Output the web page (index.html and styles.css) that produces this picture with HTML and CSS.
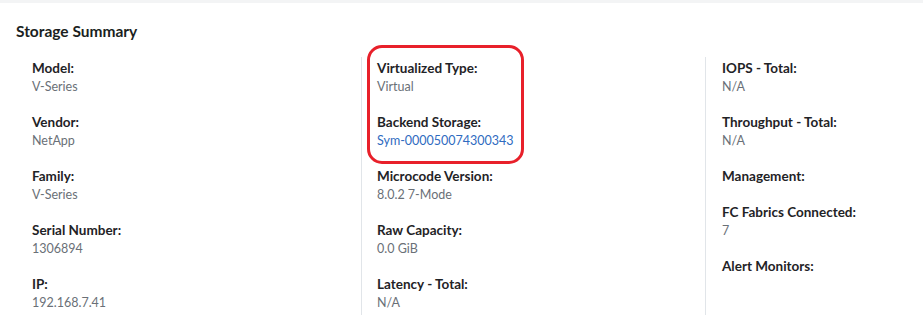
FILE: index.html
```html
<!DOCTYPE html>
<html lang="en">
<head>
<meta charset="utf-8">
<title>Storage Summary</title>
<link rel="stylesheet" href="styles.css">
</head>
<body>
<div class="topband"></div>
<section class="summary">
  <h2 class="title">Storage Summary</h2>
  <div class="grid">
    <div class="col">
      <div class="item"><div class="label">Model:</div><div class="value">V-Series</div></div>
      <div class="item"><div class="label">Vendor:</div><div class="value">NetApp</div></div>
      <div class="item"><div class="label">Family:</div><div class="value">V-Series</div></div>
      <div class="item"><div class="label">Serial Number:</div><div class="value">1306894</div></div>
      <div class="item"><div class="label">IP:</div><div class="value">192.168.7.41</div></div>
    </div>
    <div class="col divided">
      <div class="highlight"></div>
      <div class="item"><div class="label">Virtualized Type:</div><div class="value">Virtual</div></div>
      <div class="item"><div class="label">Backend Storage:</div><div class="value"><a class="link" href="#">Sym-000050074300343</a></div></div>
      <div class="item"><div class="label">Microcode Version:</div><div class="value">8.0.2 7-Mode</div></div>
      <div class="item"><div class="label">Raw Capacity:</div><div class="value">0.0 GiB</div></div>
      <div class="item"><div class="label">Latency - Total:</div><div class="value">N/A</div></div>
    </div>
    <div class="col divided third">
      <div class="item"><div class="label">IOPS - Total:</div><div class="value">N/A</div></div>
      <div class="item"><div class="label">Throughput - Total:</div><div class="value">N/A</div></div>
      <div class="item"><div class="label">Management:</div></div>
      <div class="item"><div class="label">FC Fabrics Connected:</div><div class="value">7</div></div>
      <div class="item"><div class="label">Alert Monitors:</div></div>
    </div>
  </div>
</section>
</body>
</html>
```
FILE: styles.css
```css
html, body {
  margin: 0;
  padding: 0;
  background: #ffffff;
  overflow: hidden;
}
body {
  font-family: Lato, "Open Sans", "Liberation Sans", sans-serif;
  color: #1f2326;
}
.topband {
  height: 3px;
  background: #f3f4f5;
}
.summary {
  padding: 17px 0 0 16px;
}
.title {
  margin: 0;
  font-size: 15.5px;
  line-height: 22px;
  font-weight: 700;
  color: #1b1f22;
}
.grid {
  display: grid;
  grid-template-columns: 345px 344px 1fr;
  margin-top: 15px;
}
.col {
  position: relative;
  display: flex;
  flex-direction: column;
  gap: 18px;
  padding: 2px 0 4px 16px;
}
.divided {
  border-left: 1px solid #e1e5e9;
  padding-left: 15px;
}
.third {
  padding-left: 16px;
}
.item {
  display: flex;
  flex-direction: column;
}
.label {
  font-size: 13.5px;
  line-height: 18px;
  font-weight: 700;
  color: #1f2326;
}
.value {
  font-size: 12.5px;
  line-height: 17px;
  padding-top: 1px;
  color: #6a7077;
}
.link {
  color: #2f6bbf;
  text-decoration: none;
}
.highlight {
  position: absolute;
  left: 5px;
  top: -12px;
  width: 151px;
  height: 113px;
  border: 3px solid #e8202a;
  border-radius: 15px;
  pointer-events: none;
}
```
